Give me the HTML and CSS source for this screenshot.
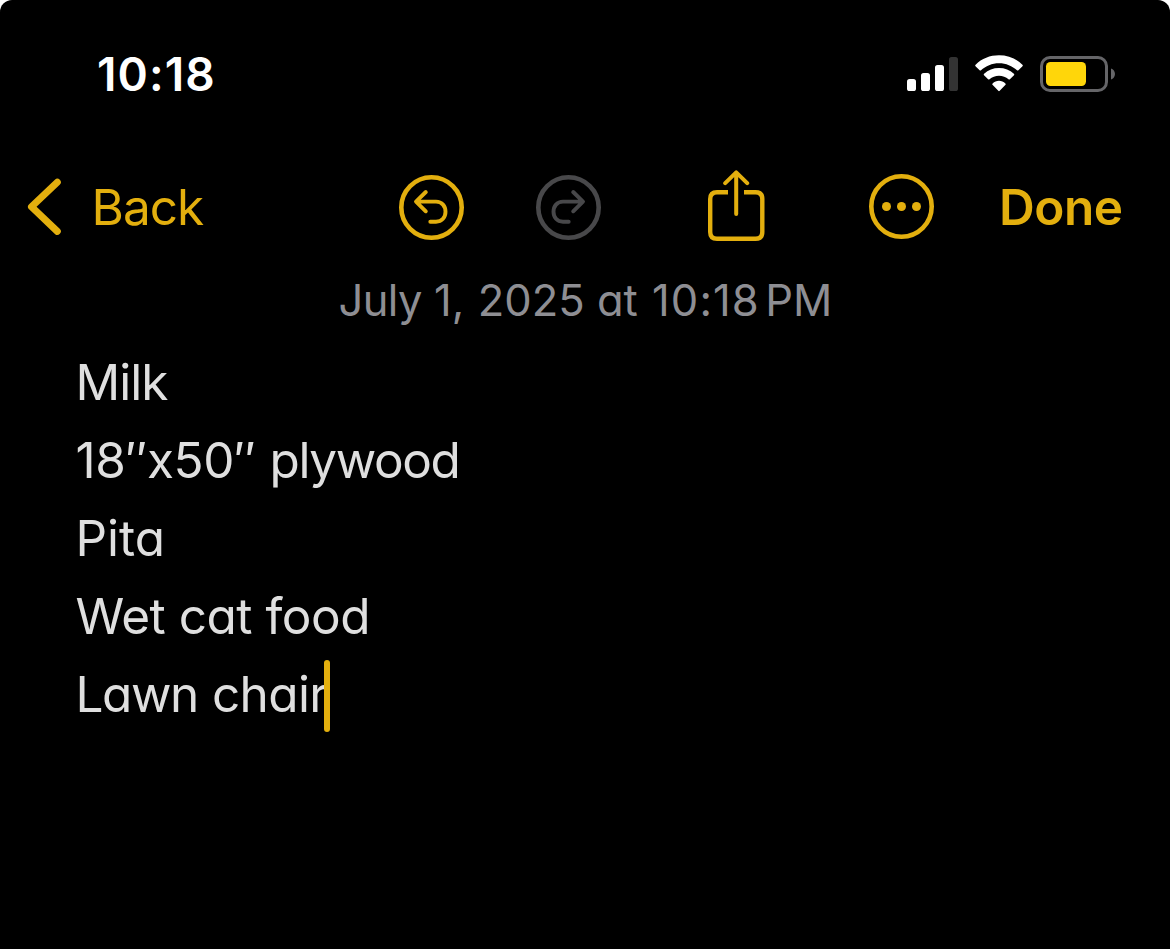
FILE: index.html
```html
<!DOCTYPE html>
<html lang="en">
<head>
<meta charset="utf-8">
<title>Notes</title>
<link rel="stylesheet" href="styles.css">
</head>
<body>
<main class="phone">
  <header class="status">
    <time class="clock">10:18</time>
    <div class="indicators">
      <svg class="signal" width="52" height="36" viewBox="0 0 52 36" fill="#fff">
        <rect x="0" y="23" width="9" height="12" rx="2.6"/>
        <rect x="14" y="17" width="9" height="18" rx="2.6"/>
        <rect x="28" y="9" width="9" height="26" rx="2.6"/>
        <rect x="42" y="1" width="9" height="34" rx="2.6" fill="#333"/>
      </svg>
      <svg class="wifi" width="50" height="38" viewBox="0 0 50 38" fill="#fff">
        <path d="M25 8.200C32 8.200 38.300 10.900 43 15.300Q43.700 15.900 44.400 15.200L48.500 11.200Q49.200 10.500 48.400 9.800C42.200 3.500 34 .3 25 .3S7.800 3.500 1.600 9.800Q.8 10.500 1.500 11.200L5.600 15.200Q6.300 15.900 7 15.300C11.700 10.900 18 8.200 25 8.200Z"/>
        <path d="M25 20.700C28.600 20.700 31.900 22.100 34.500 24.300Q35.200 24.900 35.900 24.200L40 20.200Q40.700 19.500 39.900 18.800C35.900 15 30.700 13 25 13S14.100 15 10.100 18.800Q9.300 19.500 10 20.200L14.100 24.200Q14.800 24.900 15.500 24.300C18.100 22.100 21.400 20.700 25 20.700Z"/>
        <path d="M31.400 28.400Q32.200 29.100 31.500 29.800L25.700 35.800Q25 36.500 24.300 35.800L18.500 29.800Q17.800 29.100 18.600 28.400C22.100 25 27.900 25 31.400 28.400Z"/>
      </svg>
      <svg class="battery" width="76" height="36" viewBox="0 0 76 36">
        <rect x="1.500" y="1.500" width="65" height="33" rx="8.500" fill="none" stroke="#656568" stroke-width="3"/>
        <rect x="6" y="6" width="40" height="24" rx="4.500" fill="#ffd60a"/>
        <path d="M71 12.500C73.300 13.300 75 15.500 75 18S73.300 22.700 71 23.500Z" fill="#656568"/>
      </svg>
    </div>
  </header>

  <nav class="toolbar">
    <a class="back">
      <svg width="36" height="60" viewBox="0 0 36 60"><path d="M31.300 5.200L5.500 29.800L31.300 54.400" fill="none" stroke="currentColor" stroke-width="7" stroke-linecap="round" stroke-linejoin="round"/></svg>
      <span class="back-label">Back</span>
    </a>
    <svg class="undo" width="65" height="65" viewBox="0.5 0.5 65 65" fill="none" stroke="currentColor" stroke-linecap="round" stroke-linejoin="round">
      <circle cx="33" cy="33" r="30.200" stroke-width="4.600"/>
      <path stroke-width="3.900" d="M27.300 17.500L17.500 27.100L27.300 36.800M18.500 27.100H37.500C43.500 27.100 47 31.700 47 37.200S43.500 47.200 37.500 47.200H31.800"/>
    </svg>
    <svg class="redo" width="65" height="65" viewBox="0.5 0.5 65 65" fill="none" stroke="currentColor" stroke-linecap="round" stroke-linejoin="round">
      <circle cx="33" cy="33" r="30.200" stroke-width="4.600"/>
      <path stroke-width="3.900" d="M37.700 17.500L47.500 27.100L37.700 36.800M46.500 27.100H27.500C21.500 27.100 18 31.700 18 37.200S21.500 47.200 27.500 47.200H33.200"/>
    </svg>
    <svg class="share" width="57" height="72" viewBox="0.5 0 57 72" fill="none" stroke="currentColor" stroke-linejoin="round">
      <path stroke-width="4.400" d="M20.500 22.200H9.500Q2.700 22.200 2.700 29V62Q2.700 68.800 9.500 68.800H48Q54.800 68.800 54.800 62V29Q54.800 22.200 48 22.200H36.500"/>
      <path stroke-width="4" stroke-linecap="round" d="M28.700 2.500V44M17.700 13.200L28.700 2.300L39.700 13.200"/>
    </svg>
    <svg class="more" width="65" height="65" viewBox="0.5 0.5 65 65" fill="currentColor">
      <circle cx="33" cy="33" r="30.200" fill="none" stroke="currentColor" stroke-width="4.600"/>
      <circle cx="18" cy="33" r="4.500"/><circle cx="33" cy="33" r="4.500"/><circle cx="48" cy="33" r="4.500"/>
    </svg>
    <a class="done">Done</a>
  </nav>

  <article class="note">
    <p class="date"><span class="month">July</span> 1, <span class="year">2025</span> at <span class="hour">10:18</span><span class="meridiem">PM</span></p>
    <p class="line milk">Milk</p>
    <p class="line"><span class="size">18″x50″</span> <span class="tight">plywood</span></p>
    <p class="line">Pita</p>
    <p class="line food">Wet cat food</p>
    <p class="line chair"><span class="tight">Lawn</span> <span class="seat">chair</span><i class="caret"></i></p>
  </article>
</main>
</body>
</html>
```

FILE: styles.css
```css
* { box-sizing: border-box; }
body { margin: 0; background: #fff; font-family: Inter, sans-serif; }
svg { display: block; flex: none; }
p { margin: 0; }

.phone {
  height: 949px;
  overflow: hidden;
  background: #000;
  border-radius: 12px 12px 0 0;
  color: #dfdfdf;
}

.status {
  display: flex;
  justify-content: space-between;
  height: 169px;
  padding: 46px 54px 0 97px;
  color: #fff;
}
.clock { font-size: 46px; line-height: 56px; font-weight: 600; letter-spacing: 1.1px; white-space: nowrap; }
.indicators { display: flex; padding-top: 10px; }
.wifi { margin: -1px 0 0 15px; }
.battery { margin-left: 16px; }

.toolbar {
  display: flex;
  align-items: flex-start;
  height: 105px;
  padding-left: 26px;
  color: #e3af0e;
  font-size: 49.5px;
  line-height: 60px;
  white-space: nowrap;
}
.back { display: flex; width: 373px; padding-top: 8px; }
.back-label { margin-left: 29.5px; letter-spacing: -1px; }
.undo { margin-top: 6px; }
.redo { margin: 6px 0 0 72px; color: #48484a; }
.share { margin: 1px 0 0 107px; }
.more { margin: 5px 0 0 104px; }
.done { margin: 8px 0 0 65px; font-weight: 600; letter-spacing: -0.5px; }

.note { font-feature-settings: "cv11"; }
.date {
  height: 69px;
  padding-left: 338.5px;
  color: #8e8e93;
  font-size: 43.5px;
  line-height: 52px;
  white-space: nowrap;
}
.month { letter-spacing: -0.6px; }
.year { margin-left: 1.2px; }
.hour { margin-left: 2px; letter-spacing: 1.1px; }
.meridiem { margin-left: 5.5px; }
.line {
  padding-left: 75.5px;
  font-size: 49.5px;
  line-height: 78px;
  height: 78px;
  white-space: nowrap;
}
.milk { letter-spacing: -1px; }
.size { letter-spacing: -0.4px; }
.tight { letter-spacing: -1.4px; }
.food { letter-spacing: -0.5px; }
.seat { letter-spacing: -0.6px; }
.chair { position: relative; }
.caret {
  position: absolute;
  left: 324px;
  top: 5px;
  width: 6px;
  height: 72px;
  border-radius: 3px;
  background: #e3af0e;
}
```
